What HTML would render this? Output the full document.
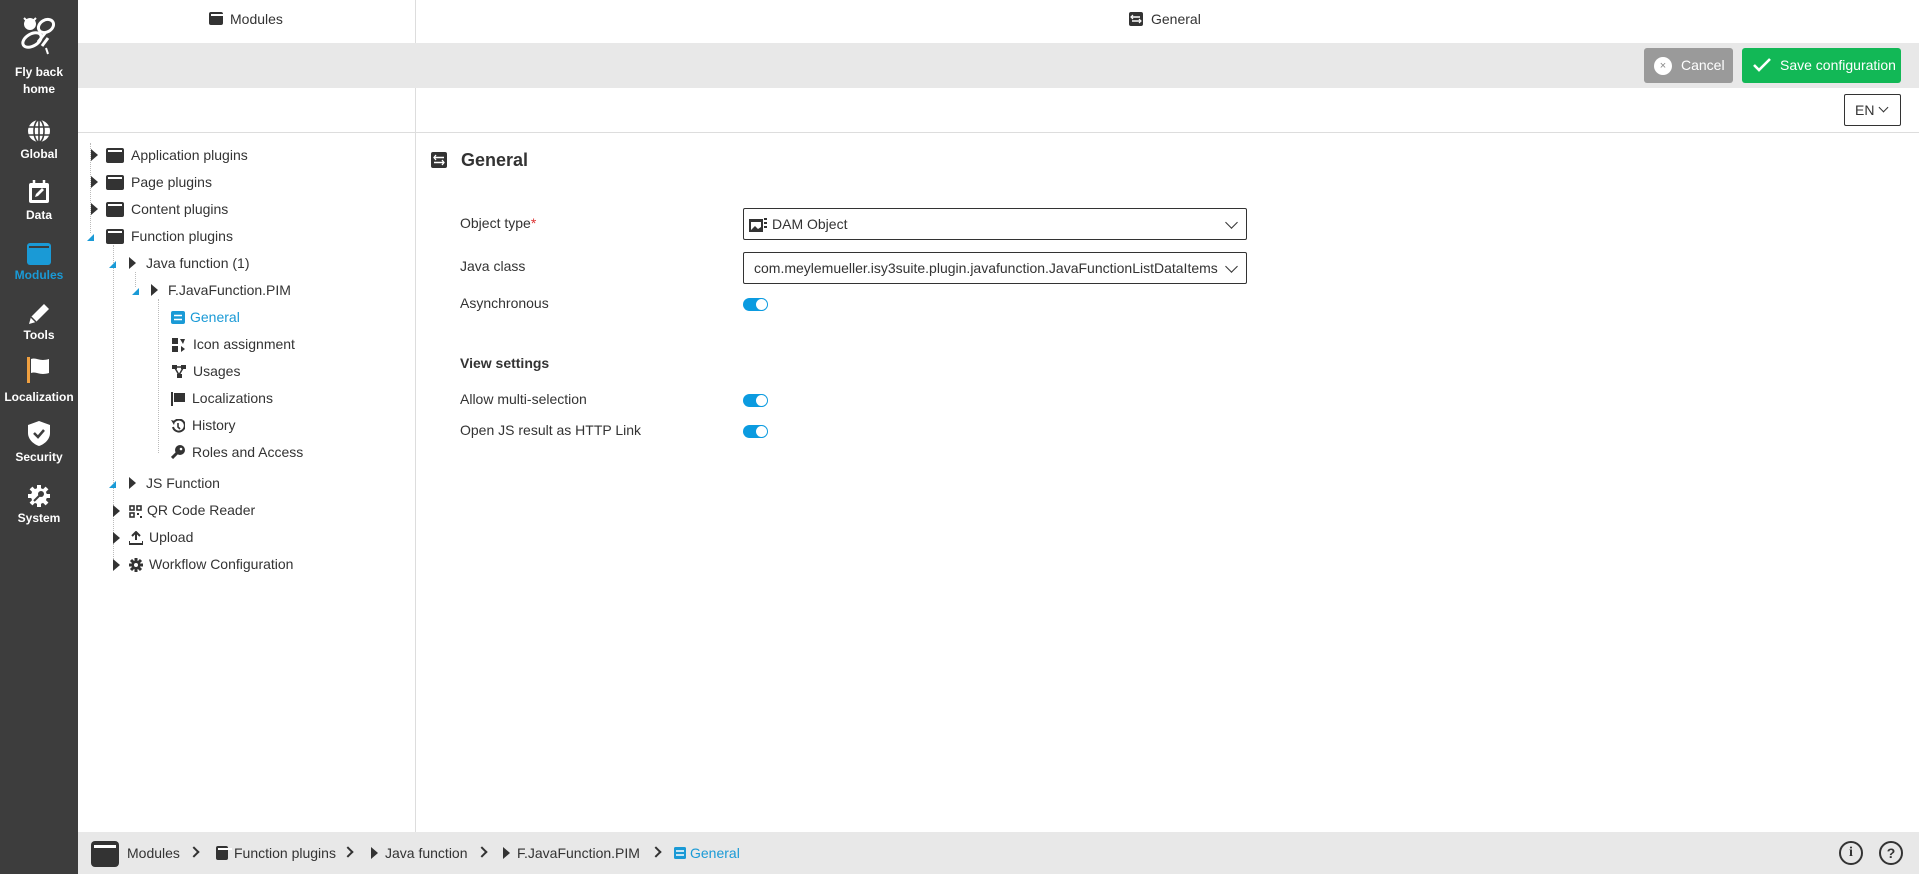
<!DOCTYPE html>
<html><head><meta charset="utf-8"><style>
*{box-sizing:border-box;margin:0;padding:0}
body{width:1919px;height:874px;position:relative;overflow:hidden;background:#fff;font-family:"Liberation Sans",Arial,sans-serif;color:#333;font-size:14px}
.abs{position:absolute}
#side{left:0;top:0;width:78px;height:874px;background:#3d3d3d}
.si{position:absolute;left:0;width:78px;text-align:center;color:#fff;font-weight:bold;font-size:12px}
.row{position:absolute;white-space:nowrap;line-height:16px;font-size:14px}
.tri{position:absolute;width:0;height:0;border-top:6px solid transparent;border-bottom:6px solid transparent;border-left:7px solid #333}
.bl{position:absolute;width:0;height:0;border-left:7px solid transparent;border-bottom:7px solid #1a9ad6}
.mod{position:absolute;width:18px;height:15px;background:#333;border-radius:2px}
.mod:after{content:"";position:absolute;left:2px;top:2px;width:14px;height:2px;background:#fff}
.lbl{position:absolute;left:460px;font-size:14px;line-height:16px}
.sel{position:absolute;left:743px;width:504px;border:1px solid #333;border-radius:2px;background:#fff}
.chev{position:absolute;right:10px;top:9px;width:9px;height:9px;border-right:1.5px solid #333;border-bottom:1.5px solid #333;transform:rotate(45deg)}
.tog{position:absolute;left:743px;width:25px;height:13px;border-radius:7px;background:#0b9be0}
.tog:after{content:"";position:absolute;right:1px;top:1px;width:11px;height:11px;border-radius:50%;background:#fff}
.dot{position:absolute;border-left:1px dotted #bbb}
.bc{position:absolute;top:845px;font-size:14px;line-height:16px;color:#333;white-space:nowrap}
.bch{position:absolute;top:848px;width:8px;height:8px;border-right:2px solid #333;border-bottom:2px solid #333;transform:rotate(-45deg)}
</style></head><body>
<div id="side" class="abs">
<svg class="abs" style="left:18px;top:14px" width="40" height="42" viewBox="0 0 40 42"><g fill="none" stroke="#fff" stroke-width="3"><ellipse cx="28" cy="12" rx="8" ry="6" transform="rotate(-30 28 12)"/><ellipse cx="14" cy="26" rx="10" ry="6" transform="rotate(-30 14 26)"/><path d="M20 28l8-10M24 32l6-8"/></g><circle cx="12" cy="10" r="6" fill="#fff"/><path d="M6 4l3 3M18 4l-3 3M28 34l2 6" stroke="#fff" stroke-width="2"/></svg>
<div class="si" style="top:64px;line-height:17px">Fly back<br>home</div>
<svg class="abs" style="left:27px;top:119px" width="24" height="24" viewBox="0 0 24 24"><circle cx="12" cy="12" r="11" fill="#fff"/><g stroke="#3d3d3d" stroke-width="1.6" fill="none"><ellipse cx="12" cy="12" rx="5" ry="11"/><path d="M1 8h22M1 16h22M12 1v22"/></g></svg>
<div class="si" style="top:147px">Global</div>
<svg class="abs" style="left:28px;top:180px" width="22" height="24" viewBox="0 0 22 24"><rect x="1" y="3" width="20" height="20" rx="2" fill="#fff"/><rect x="4" y="8" width="14" height="12" fill="#3d3d3d"/><path d="M6 0v5M16 0v5" stroke="#fff" stroke-width="2.5"/><path d="M7 17l1-3 6-6 2 2-6 6z" fill="#fff"/></svg>
<div class="si" style="top:208px">Data</div>
<div class="abs" style="left:27px;top:243px;width:24px;height:22px;background:#1a9ad6;border-radius:3px"><div style="margin:3px 2px;height:2px;background:#3d3d3d"></div></div>
<div class="si" style="top:268px;color:#1a9ad6">Modules</div>
<svg class="abs" style="left:26px;top:301px" width="26" height="26" viewBox="0 0 26 26"><path d="M3 23l2-7L18 3l5 5L10 21z" fill="#fff"/><path d="M5 16l5 5" stroke="#3d3d3d" stroke-width="1.5"/></svg>
<div class="si" style="top:328px">Tools</div>
<svg class="abs" style="left:27px;top:357px" width="24" height="26" viewBox="0 0 24 26"><rect x="0" y="0" width="3" height="26" fill="#f0a040"/><path d="M4 2c6-2 8 3 18 0v14c-10 3-12-2-18 0z" fill="#fff"/></svg>
<div class="si" style="top:390px">Localization</div>
<svg class="abs" style="left:28px;top:421px" width="22" height="25" viewBox="0 0 22 25"><path d="M11 0l11 4v8c0 6-5 11-11 13C5 23 0 18 0 12V4z" fill="#fff"/><path d="M6 12l4 4 6-7" stroke="#3d3d3d" stroke-width="2.5" fill="none"/></svg>
<div class="si" style="top:450px">Security</div>
<svg class="abs" style="left:27px;top:484px" width="24" height="24" viewBox="0 0 24 24"><circle cx="12" cy="12" r="8" fill="#fff"/><g stroke="#fff" stroke-width="4"><path d="M12 1v22M1 12h22M4 4l16 16M20 4L4 20"/></g><path d="M7 17l6-6" stroke="#3d3d3d" stroke-width="2"/><circle cx="14" cy="10" r="3" fill="#3d3d3d"/></svg>
<div class="si" style="top:511px">System</div>
</div>

<div class="abs" style="left:78px;top:0;width:1841px;height:43px;background:#fff"></div>
<div class="abs" style="left:415px;top:0;width:1px;height:832px;background:#ddd"></div>
<div class="mod" style="left:209px;top:12px;width:14px;height:13px"></div>
<div class="row" style="left:230px;top:11px;">Modules</div>
<svg class="abs" style="left:1129px;top:12px" width="14" height="14" viewBox="0 0 14 14"><rect width="14" height="14" rx="2" fill="#333"/><path d="M3 5h8M3 9h8" stroke="#fff" stroke-width="1.5"/><path d="M4 3L2 5l2 2M10 7l2 2-2 2" stroke="#fff" stroke-width="1.2" fill="none"/></svg>
<div class="row" style="left:1151px;top:11px">General</div>
<div class="abs" style="left:78px;top:43px;width:1841px;height:45px;background:#e8e8e8"></div>
<div class="abs" style="left:1644px;top:48px;width:89px;height:35px;background:#9a9a9a;border-radius:3px"></div>
<div class="abs" style="left:1654px;top:57px;width:18px;height:18px;border-radius:50%;background:#fff;color:#888;font-size:11px;text-align:center;line-height:18px">×</div>
<div class="row" style="left:1681px;top:57px;color:#fff">Cancel</div>
<div class="abs" style="left:1742px;top:48px;width:159px;height:35px;background:#12b856;border-radius:3px"></div>
<svg class="abs" style="left:1753px;top:57px" width="18" height="16" viewBox="0 0 18 16"><path d="M1 8l5 5L17 2" stroke="#fff" stroke-width="2.6" fill="none"/></svg>
<div class="row" style="left:1780px;top:57px;color:#fff">Save configuration</div>
<div class="abs" style="left:1844px;top:94px;width:57px;height:32px;border:1px solid #333;border-radius:2px"></div>
<div class="row" style="left:1855px;top:102px">EN</div>
<div class="abs" style="left:1880px;top:104px;width:7px;height:7px;border-right:1.3px solid #333;border-bottom:1.3px solid #333;transform:rotate(45deg)"></div>
<div class="abs" style="left:78px;top:132px;width:1841px;height:1px;background:#ddd"></div>

<div class="dot" style="left:90px;top:143px;height:90px"></div>
<div class="dot" style="left:113px;top:245px;height:320px"></div>
<div class="dot" style="left:135px;top:272px;height:15px"></div>
<div class="dot" style="left:158px;top:299px;height:154px"></div>
<div class="tri" style="left:91px;top:149px"></div><div class="mod" style="left:106px;top:148px"></div><div class="row" style="left:131px;top:147px">Application plugins</div>
<div class="tri" style="left:91px;top:176px"></div><div class="mod" style="left:106px;top:175px"></div><div class="row" style="left:131px;top:174px">Page plugins</div>
<div class="tri" style="left:91px;top:203px"></div><div class="mod" style="left:106px;top:202px"></div><div class="row" style="left:131px;top:201px">Content plugins</div>
<div class="bl" style="left:87px;top:234px"></div><div class="mod" style="left:106px;top:229px"></div><div class="row" style="left:131px;top:228px">Function plugins</div>
<div class="bl" style="left:109px;top:261px"></div><div class="tri" style="left:129px;top:257px"></div><div class="row" style="left:146px;top:255px">Java function (1)</div>
<div class="bl" style="left:132px;top:288px"></div><div class="tri" style="left:151px;top:284px"></div><div class="row" style="left:168px;top:282px">F.JavaFunction.PIM</div>
<svg class="abs" style="left:171px;top:311px" width="14" height="13" viewBox="0 0 14 13"><rect width="14" height="13" rx="2" fill="#1a9ad6"/><path d="M3 4.5h8M3 8.5h8" stroke="#fff" stroke-width="1.5"/></svg>
<div class="row" style="left:190px;top:309px;color:#1a9ad6">General</div>
<svg class="abs" style="left:172px;top:338px" width="14" height="14" viewBox="0 0 14 14"><rect x="0" y="0" width="6" height="6" fill="#333"/><rect x="0" y="8" width="6" height="6" fill="#333"/><path d="M8 1h5l-2 5zM9 8l4 3-4 3z" fill="#333"/></svg>
<div class="row" style="left:193px;top:336px">Icon assignment</div>
<svg class="abs" style="left:172px;top:365px" width="14" height="13" viewBox="0 0 14 13"><rect width="5" height="4" fill="#333"/><rect x="9" width="5" height="4" fill="#333"/><rect x="5" y="9" width="5" height="4" fill="#333"/><path d="M3 3l4 7M11 3l-4 7M3 2h8" stroke="#333" stroke-width="1.5"/></svg>
<div class="row" style="left:193px;top:363px">Usages</div>
<svg class="abs" style="left:171px;top:392px" width="14" height="14" viewBox="0 0 14 14"><rect width="2" height="14" fill="#333"/><path d="M3 1h11v9H3z" fill="#333"/></svg>
<div class="row" style="left:192px;top:390px">Localizations</div>
<svg class="abs" style="left:171px;top:419px" width="14" height="14" viewBox="0 0 14 14"><path d="M3 3a6 6 0 1 1-1 5" stroke="#333" stroke-width="2" fill="none"/><path d="M0 1l4 1-1 4z" fill="#333"/><path d="M7 4v4l2 2" stroke="#333" stroke-width="1.6" fill="none"/></svg>
<div class="row" style="left:192px;top:417px">History</div>
<svg class="abs" style="left:171px;top:445px" width="14" height="14" viewBox="0 0 14 14"><circle cx="9" cy="5" r="5" fill="#333"/><path d="M6 8l-5 5" stroke="#333" stroke-width="3"/><circle cx="10" cy="4" r="1.3" fill="#fff"/></svg>
<div class="row" style="left:192px;top:444px">Roles and Access</div>
<div class="bl" style="left:109px;top:481px"></div><div class="tri" style="left:129px;top:477px"></div><div class="row" style="left:146px;top:475px">JS Function</div>
<div class="tri" style="left:113px;top:505px"></div>
<svg class="abs" style="left:129px;top:505px" width="13" height="13" viewBox="0 0 13 13"><g fill="none" stroke="#333" stroke-width="1.6"><rect x="1" y="1" width="4" height="4"/><rect x="8" y="1" width="4" height="4"/><rect x="1" y="8" width="4" height="4"/></g><rect x="8" y="8" width="2" height="2" fill="#333"/><rect x="11" y="11" width="2" height="2" fill="#333"/></svg>
<div class="row" style="left:147px;top:502px">QR Code Reader</div>
<div class="tri" style="left:113px;top:532px"></div>
<svg class="abs" style="left:129px;top:531px" width="14" height="14" viewBox="0 0 14 14"><path d="M7 1v8M3 5l4-4 4 4" stroke="#333" stroke-width="2" fill="none"/><path d="M0 10v3h14v-3" stroke="#333" stroke-width="2" fill="none"/></svg>
<div class="row" style="left:149px;top:529px">Upload</div>
<div class="tri" style="left:113px;top:559px"></div>
<svg class="abs" style="left:129px;top:558px" width="14" height="14" viewBox="0 0 14 14"><circle cx="7" cy="7" r="4.5" fill="#333"/><g stroke="#333" stroke-width="3"><path d="M7 0v14M0 7h14M2 2l10 10M12 2L2 12"/></g><circle cx="7" cy="7" r="2" fill="#fff"/></svg>
<div class="row" style="left:149px;top:556px">Workflow Configuration</div>

<svg class="abs" style="left:431px;top:152px" width="16" height="16" viewBox="0 0 16 16"><rect width="16" height="16" rx="2" fill="#333"/><path d="M3 5.5h10M3 10.5h10" stroke="#fff" stroke-width="1.6"/><path d="M5 3L3 5.5 5 8M11 8l2 2.5-2 2.5" stroke="#fff" stroke-width="1.3" fill="none"/></svg>
<div class="abs" style="left:461px;top:150px;font-size:18px;font-weight:bold;line-height:20px">General</div>
<div class="lbl" style="top:215px">Object type<span style="color:#d33">*</span></div>
<div class="sel" style="top:208px;height:32px"><svg class="abs" style="left:5px;top:8px" width="18" height="16" viewBox="0 0 18 16"><rect x="0" y="2" width="14" height="13" fill="#333"/><rect x="2" y="5" width="10" height="8" fill="#fff"/><path d="M2 13l4-4 3 3 3-2v3z" fill="#333"/><path d="M15 2h3M15 6h3M15 10h3" stroke="#333" stroke-width="2"/></svg><div class="row" style="left:28px;top:7px">DAM Object</div><div class="chev"></div></div>
<div class="lbl" style="top:258px">Java class</div>
<div class="sel" style="top:252px;height:32px"><div class="row" style="left:10px;top:7px">com.meylemueller.isy3suite.plugin.javafunction.JavaFunctionListDataItems</div><div class="chev"></div></div>
<div class="lbl" style="top:295px">Asynchronous</div>
<div class="tog" style="top:298px"></div>
<div class="lbl" style="top:355px;font-weight:bold">View settings</div>
<div class="lbl" style="top:391px">Allow multi-selection</div>
<div class="tog" style="top:394px"></div>
<div class="lbl" style="top:422px">Open JS result as HTTP Link</div>
<div class="tog" style="top:425px"></div>

<div class="abs" style="left:78px;top:832px;width:1841px;height:42px;background:#e8e8e8"></div>
<div class="abs" style="left:91px;top:841px;width:28px;height:26px;background:#333;border-radius:4px"><div style="margin:4px 3px;height:3px;background:#fff"></div></div>
<div class="bc" style="left:127px">Modules</div>
<div class="bch" style="left:190px"></div>
<div class="mod" style="left:216px;top:846px;width:12px;height:14px"></div>
<div class="bc" style="left:234px">Function plugins</div>
<div class="bch" style="left:344px"></div>
<div class="tri" style="left:371px;top:847px"></div>
<div class="bc" style="left:385px">Java function</div>
<div class="bch" style="left:478px"></div>
<div class="tri" style="left:503px;top:847px"></div>
<div class="bc" style="left:517px">F.JavaFunction.PIM</div>
<div class="bch" style="left:652px"></div>
<svg class="abs" style="left:674px;top:847px" width="12" height="12" viewBox="0 0 12 12"><rect width="12" height="12" rx="1.5" fill="#1a9ad6"/><path d="M2 4h8M2 8h8" stroke="#fff" stroke-width="1.4"/></svg>
<div class="bc" style="left:690px;color:#1a9ad6">General</div>
<div class="abs" style="left:1839px;top:841px;width:24px;height:24px;border:2px solid #333;border-radius:50%;text-align:center;font-weight:bold;font-size:14px;line-height:20px;font-family:'Liberation Serif',serif">i</div>
<div class="abs" style="left:1879px;top:841px;width:24px;height:24px;border:2px solid #333;border-radius:50%;text-align:center;font-weight:bold;font-size:14px;line-height:20px">?</div>
</body></html>
